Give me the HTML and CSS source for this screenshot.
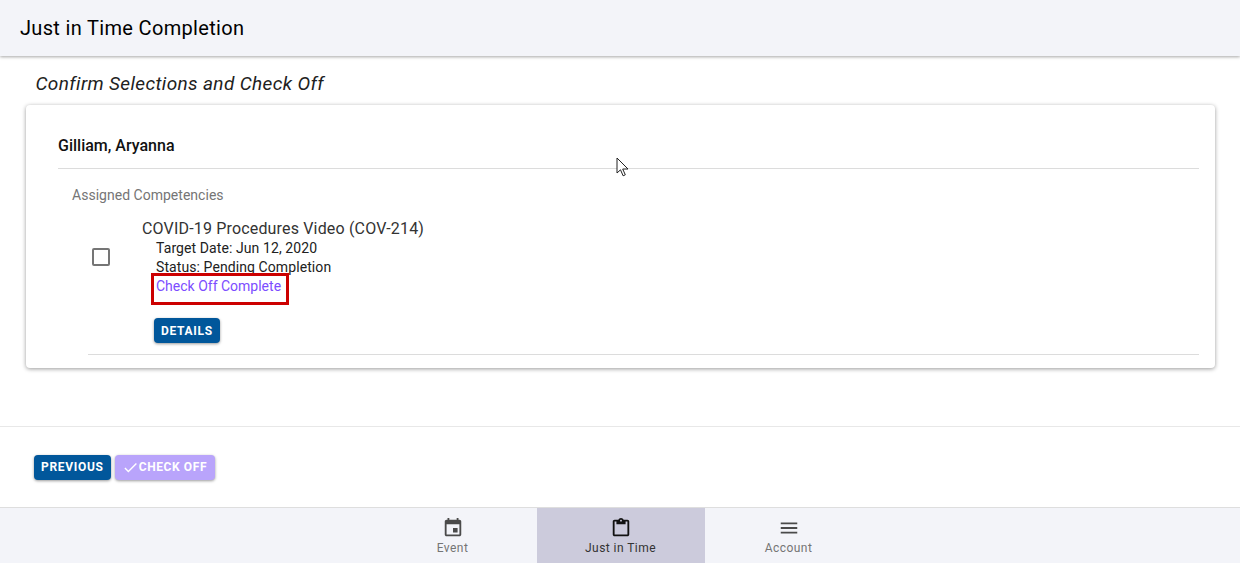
FILE: index.html
```html
<!DOCTYPE html>
<html lang="en">
<head>
    <meta charset="UTF-8">
    <title>Just in Time Completion</title>
    <link rel="stylesheet" href="styles.css">
</head>
<body>
    <header class="toolbar">Just in Time Completion</header>
    <main class="content">
        <h2 class="step-title">Confirm Selections and Check Off</h2>
        <section class="card">
            <h3 class="person">Gilliam, Aryanna</h3>
            <div class="assigned">
                <div class="assigned-label">Assigned Competencies</div>
                <div class="item">
                    <div class="check-col"><span class="checkbox"></span></div>
                    <div class="item-body">
                        <div class="item-title">COVID-19 Procedures Video (COV-214)</div>
                        <div class="item-line">Target Date: Jun 12, 2020</div>
                        <div class="item-line">Status: Pending Completion</div>
                        <div class="item-line"><a class="link">Check Off Complete</a></div>
                        <button class="btn btn-details">DETAILS</button>
                    </div>
                </div>
            </div>
        </section>
    </main>
    <div class="actions">
        <button class="btn">PREVIOUS</button>
        <button class="btn btn-disabled">
            <svg class="btn-icon" viewBox="0 0 24 24"><path d="M9 16.17 4.83 12l-1.42 1.41L9 19 21 7l-1.41-1.41z"/></svg>CHECK OFF
        </button>
    </div>
    <nav class="tabs">
        <div class="tab">
            <svg viewBox="0 0 24 24"><path d="M17 12h-5v5h5v-5zM16 1v2H8V1H6v2H5c-1.11 0-1.99.9-1.99 2L3 19c0 1.1.89 2 2 2h14c1.1 0 2-.9 2-2V5c0-1.1-.9-2-2-2h-1V1h-2zm3 18H5V8h14v11z"/></svg>
            <span>Event</span>
        </div>
        <div class="tab active">
            <svg viewBox="0 0 24 24"><path d="M19 3h-4.18C14.4 1.84 13.3 1 12 1s-2.4.84-2.82 2H5c-1.1 0-2 .9-2 2v14c0 1.1.9 2 2 2h14c1.1 0 2-.9 2-2V5c0-1.1-.9-2-2-2zm-7 0c.55 0 1 .45 1 1s-.45 1-1 1-1-.45-1-1 .45-1 1-1zm7 16H5V5h2v3h10V5h2v14z"/></svg>
            <span>Just in Time</span>
        </div>
        <div class="tab">
            <svg viewBox="0 0 24 24"><path d="M3 18h18v-2H3v2zm0-5h18v-2H3v2zm0-7v2h18V6H3z"/></svg>
            <span>Account</span>
        </div>
    </nav>
    <svg class="pointer" width="13" height="20" viewBox="0 0 13 20"><path d="M1 1v15l3.5-3.2 2.6 6 2.2-1-2.6-5.8H12z" fill="#fff" stroke="#222" stroke-width="1"/></svg>
</body>
</html>
```

FILE: styles.css
```css
*{
    margin: 0;
    padding: 0;
    box-sizing: border-box;
}
html, body{
    height: 100%;
}
body{
    font-family: Roboto, sans-serif;
    color: #212121;
    background-color: white;
    display: flex;
    flex-direction: column;
    overflow: hidden;
}
.toolbar{
    height: 56px;
    flex-shrink: 0;
    padding: 0 20px;
    display: flex;
    align-items: center;
    font-size: 20px;
    font-weight: 400;
    letter-spacing: .33px;
    color: #000;
    background-color: #f3f4f9;
    box-shadow: 0 1px 3px rgba(0, 0, 0, .35);
}
.content{
    flex: 1;
    padding: 16px 25px 0 26px;
}
.step-title{
    font-size: 19px;
    font-weight: 400;
    font-style: italic;
    line-height: 24px;
    padding-left: 9.5px;
    margin-bottom: 9px;
    letter-spacing: .36px;
}
.card{
    height: 263px;
    padding: 0 16px 0 32px;
    background-color: white;
    border-radius: 4px;
    box-shadow: 0 1px 4px rgba(0, 0, 0, .4);
}
.person{
    height: 64px;
    padding-top: 31px;
    font-size: 16px;
    line-height: 20px;
    font-weight: 500;
    color: #111;
    border-bottom: 1px solid #dcdcdc;
}
.assigned{
    padding-top: 16px;
}
.assigned-label{
    font-size: 14px;
    line-height: 20px;
    padding-left: 14px;
    color: #757575;
    letter-spacing: .02px;
}
.item{
    display: flex;
    margin-left: 30px;
    height: 150px;
    padding-top: 14px;
    border-bottom: 1px solid #dcdcdc;
}
.check-col{
    width: 54px;
    padding-top: 29px;
    padding-left: 4px;
}
.checkbox{
    display: block;
    width: 18px;
    height: 18px;
    border: 2px solid #757575;
    border-radius: 2px;
}
.item-title{
    font-size: 16px;
    line-height: 20px;
    letter-spacing: .17px;
    color: #333;
}
.item-line{
    font-size: 14px;
    line-height: 19px;
    padding-left: 14px;
    letter-spacing: .09px;
}
.link{
    position: relative;
    color: #7c4dff;
    display: inline-block;
    letter-spacing: 0;
}
/* red annotation box over the link */
.link::after{
    content: "";
    position: absolute;
    top: -4px;
    left: -5px;
    right: -8px;
    bottom: -9px;
    border: 3px solid #cc0000;
}
.btn{
    height: 25px;
    padding: 0 7px 2px;
    border: none;
    border-radius: 4px;
    font-family: Roboto, sans-serif;
    font-size: 12px;
    font-weight: 700;
    letter-spacing: .7px;
    color: white;
    background-color: #01579b;
    box-shadow: 0 1px 3px rgba(0, 0, 0, .4);
    display: inline-flex;
    align-items: center;
}
.btn-details{
    margin-top: 22px;
    margin-left: 12px;
    padding-bottom: 0;
}
.btn-disabled{
    background-color: #b9a4fb;
    letter-spacing: .6px;
    padding-right: 8px;
}
.btn-icon{
    width: 17px;
    height: 17px;
    margin-top: 2px;
    fill: white;
}
.actions{
    height: 81px;
    flex-shrink: 0;
    padding: 28px 34px 0;
    border-top: 1px solid #e8e8e8;
    display: flex;
    gap: 4px;
    align-items: flex-start;
}
.tabs{
    height: 56px;
    flex-shrink: 0;
    display: flex;
    justify-content: center;
    padding-left: 2px;
    background-color: #f3f4f9;
    border-top: 1px solid #dedede;
}
.tab{
    width: 168px;
    display: flex;
    flex-direction: column;
    align-items: center;
    padding-top: 9px;
    font-size: 12px;
    letter-spacing: .45px;
    color: #757575;
}
.tab svg{
    width: 22px;
    height: 22px;
    margin-bottom: 2px;
    fill: #4a4a4a;
}
.tab span{
    margin-right: 1px;
}
.tab.active{
    background-color: #cccbdc;
    color: #333;
}
.tab.active svg{
    fill: #111;
}
.pointer{
    position: absolute;
    left: 616px;
    top: 157px;
}
```
